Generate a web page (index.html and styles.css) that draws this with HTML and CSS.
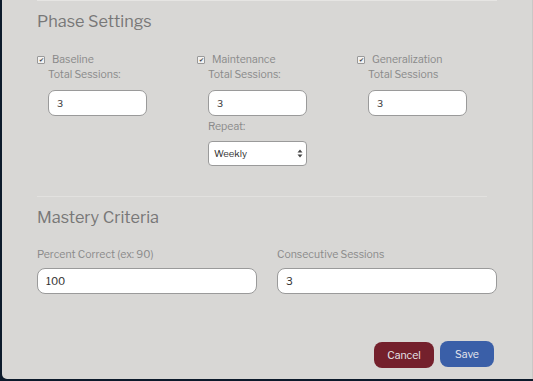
FILE: index.html
```html
<!DOCTYPE html>
<html>
<head>
<meta charset="utf-8">
<link rel="stylesheet" href="styles.css">
</head>
<body>
<div class="panel">
  <div class="content">
    <hr class="rule top-rule">
    <h2 class="heading phase-heading">Phase Settings</h2>
    <div class="phases">
      <div class="phase">
        <label class="check-row"><span class="check">&#10004;</span>Baseline</label>
        <div class="phase-body">
          <div class="field-label">Total Sessions:</div>
          <input class="small-input" type="text" value="3">
        </div>
      </div>
      <div class="phase">
        <label class="check-row"><span class="check">&#10004;</span>Maintenance</label>
        <div class="phase-body">
          <div class="field-label">Total Sessions:</div>
          <input class="small-input" type="text" value="3">
          <div class="field-label repeat-label">Repeat:</div>
          <div class="select-wrap">
            <select class="small-select"><option>Weekly</option></select>
            <svg class="select-arrows" width="6" height="9" viewBox="0 0 6 9"><path d="M3 0.5 L5.5 3.5 L0.5 3.5 Z M3 8.5 L5.5 5.5 L0.5 5.5 Z" fill="#444"/></svg>
          </div>
        </div>
      </div>
      <div class="phase">
        <label class="check-row"><span class="check">&#10004;</span>Generalization</label>
        <div class="phase-body">
          <div class="field-label">Total Sessions</div>
          <input class="small-input" type="text" value="3">
        </div>
      </div>
    </div>
    <hr class="rule mid-rule">
    <h2 class="heading mastery-heading">Mastery Criteria</h2>
    <div class="mastery">
      <div class="mastery-field">
        <div class="field-label">Percent Correct (ex: 90)</div>
        <input class="wide-input" type="text" value="100">
      </div>
      <div class="mastery-field">
        <div class="field-label">Consecutive Sessions</div>
        <input class="wide-input" type="text" value="3">
      </div>
    </div>
    <div class="actions">
      <button class="btn btn-cancel">Cancel</button>
      <button class="btn btn-save">Save</button>
    </div>
  </div>
</div>
</body>
</html>
```
FILE: styles.css
```css
html, body {
  margin: 0;
  padding: 0;
  background: #0c1a2b;
  height: 381px;
  overflow: hidden;
}
body {
  font-family: "Libre Franklin", "Roboto", "Liberation Sans", sans-serif;
}
.panel {
  margin-left: 2px;
  height: 379px;
  background: #d8d7d5;
  border-radius: 0 0 0 5px;
  border-right: 1px solid #c9c8c6;
  box-sizing: border-box;
  padding: 0 35px 0 35px;
}
.content {
  width: 460px;
  display: flex;
  flex-direction: column;
}
.rule {
  margin: 0;
  border: none;
  height: 1px;
}
.top-rule {
  background: #e6e5e3;
}
.mid-rule {
  background: #e2e1df;
  width: 450px;
  margin-top: 30px;
}
.heading {
  margin: 0;
  font-weight: 400;
  color: #787878;
  font-size: 16.3px;
  line-height: 20px;
}
.phase-heading {
  margin-top: 10px;
}
.mastery-heading {
  margin-top: 10px;
}
.phases {
  display: grid;
  grid-template-columns: 160px 160px 1fr;
  margin-top: 21px;
}
.phase {
  display: flex;
  flex-direction: column;
}
.check-row {
  display: flex;
  align-items: center;
  font-size: 10.5px;
  line-height: 15px;
  height: 15px;
  color: #8a8a8a;
}
.check {
  display: inline-flex;
  align-items: center;
  justify-content: center;
  width: 6px;
  height: 6px;
  background: #f2f2f2;
  border: 0.5px solid #999;
  border-radius: 1px;
  font-size: 6px;
  line-height: 6px;
  color: #444;
  margin-right: 7px;
}
.phase-body {
  padding-left: 11px;
  display: flex;
  flex-direction: column;
  align-items: flex-start;
}
.field-label {
  font-size: 10.5px;
  line-height: 15px;
  height: 15px;
  color: #8a8a8a;
}
.small-input {
  margin-top: 8px;
  width: 99px;
  height: 26px;
  box-sizing: border-box;
  border: 1px solid #9a9a9a;
  border-radius: 7px;
  background: #fff;
  padding: 0 8px;
  font-family: inherit;
  font-size: 9.5px;
  color: #333;
  outline: none;
}
.repeat-label {
  margin-top: 3px;
}
.select-wrap {
  position: relative;
  margin-top: 7px;
  width: 99px;
  height: 25px;
}
.small-select {
  appearance: none;
  -webkit-appearance: none;
  width: 99px;
  height: 25px;
  box-sizing: border-box;
  border: 1px solid #9a9a9a;
  border-radius: 4px;
  background: #fff;
  padding: 0 5px;
  font-family: inherit;
  font-size: 9.5px;
  color: #333;
  outline: none;
}
.select-arrows {
  position: absolute;
  right: 4px;
  top: 8px;
}
.mastery {
  display: flex;
  gap: 20px;
  margin-top: 20px;
}
.mastery-field {
  width: 220px;
  display: flex;
  flex-direction: column;
}
.wide-input {
  margin-top: 6px;
  width: 220px;
  height: 26px;
  box-sizing: border-box;
  border: 1px solid #9a9a9a;
  border-radius: 8px;
  background: #fff;
  padding: 0 8px;
  font-family: inherit;
  font-size: 10.5px;
  color: #333;
  outline: none;
}
.actions {
  display: flex;
  justify-content: flex-end;
  gap: 6px;
  margin-top: 47px;
  padding-right: 3px;
}
.btn {
  border: none;
  height: 26px;
  border-radius: 8px;
  color: #e8e8ee;
  font-family: inherit;
  font-size: 10.5px;
  padding: 0;
}
.btn-cancel {
  width: 60px;
  background: #74202c;
  margin-top: 1px;
}
.btn-save {
  width: 54px;
  background: #3a5fa8;
}
```
